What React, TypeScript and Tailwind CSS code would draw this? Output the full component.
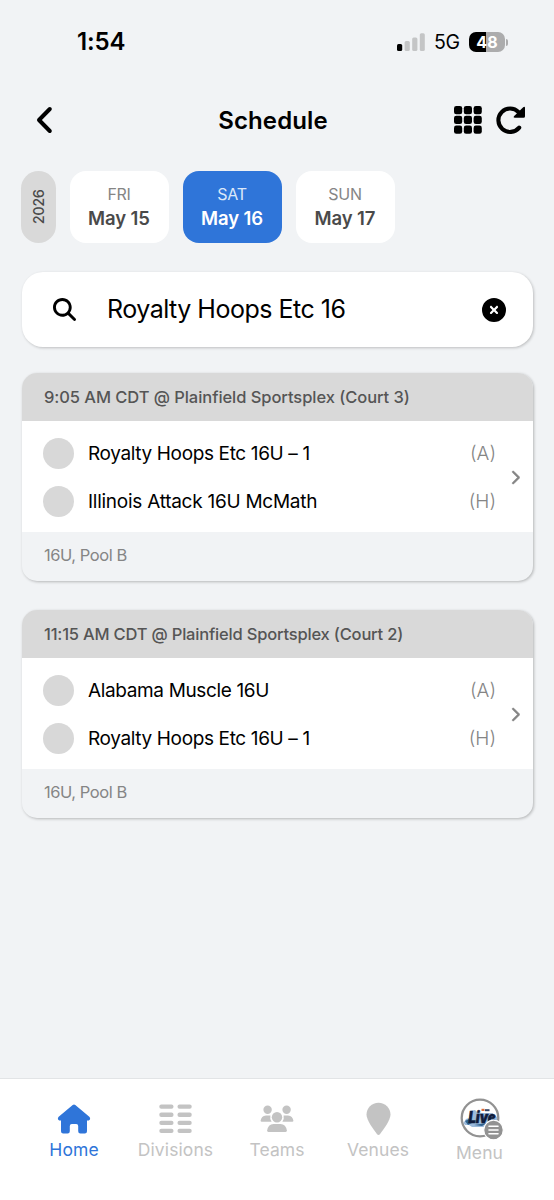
import { FaChevronRight, FaMagnifyingGlass, FaCircleXmark } from "react-icons/fa6";
import { clsx } from "clsx";

const DAYS = [
  { day: "FRI", date: "May 15", active: false },
  { day: "SAT", date: "May 16", active: true },
  { day: "SUN", date: "May 17", active: false },
];

const GAMES = [
  {
    title: "9:05 AM CDT @ Plainfield Sportsplex (Court 3)",
    titleClass: "tracking-[-0.06px]",
    pool: "16U, Pool B",
    teams: [
      { name: "Royalty Hoops Etc 16U – 1", side: "(A)", nameClass: "tracking-[-0.36px]" },
      { name: "Illinois Attack 16U McMath", side: "(H)", nameClass: "tracking-[-0.26px]" },
    ],
  },
  {
    title: "11:15 AM CDT @ Plainfield Sportsplex (Court 2)",
    titleClass: "tracking-[-0.19px]",
    pool: "16U, Pool B",
    teams: [
      { name: "Alabama Muscle 16U", side: "(A)", nameClass: "tracking-[-0.36px]" },
      { name: "Royalty Hoops Etc 16U – 1", side: "(H)", nameClass: "tracking-[-0.36px]" },
    ],
  },
];

function StatusBar() {
  return (
    <div className="flex h-[84px] shrink-0 items-center justify-between pr-[46px] pl-[77px]">
      <span className="text-[24px] font-semibold tracking-[-0.1px]">1:54</span>
      <div className="flex items-center">
        <svg width="28" height="18" viewBox="0 0 28 18">
          <rect x="0" y="11" width="5.2" height="7" rx="1.5" fill="#000" />
          <rect x="7.6" y="8" width="5.2" height="10" rx="1.5" fill="#c4c5c6" />
          <rect x="15.2" y="4.5" width="5.2" height="13.5" rx="1.5" fill="#c4c5c6" />
          <rect x="22.8" y="0.3" width="5" height="17.7" rx="1.5" fill="#c4c5c6" />
        </svg>
        <span className="mt-px ml-[9px] w-[26px] text-[19.5px] leading-none tracking-[-0.4px] whitespace-nowrap">
          5G
        </span>
        <div className="ml-[9px] flex h-5 w-9 items-center justify-center overflow-hidden rounded-[7px] bg-linear-to-r from-black from-48% to-[#acacad] to-48% text-[16px] font-bold tracking-[0.2px] text-white">
          48
        </div>
        <div className="ml-px h-[7px] w-[2px] rounded-r-full bg-[#acacad]" />
      </div>
    </div>
  );
}

function Header() {
  return (
    <header className="grid h-[72px] shrink-0 grid-cols-[1fr_auto_1fr] items-center pr-[28px] pl-[34px]">
      <svg width="20" height="28" viewBox="0 0 20 28" fill="none" stroke="#000" strokeWidth="4" strokeLinecap="round" strokeLinejoin="round">
        <path d="M15.8 3 L5 14 L15.8 25" />
      </svg>
      <h1 className="mt-px mr-[14px] text-[24px] font-semibold tracking-[0.1px]">Schedule</h1>
      <div className="flex items-center justify-end gap-[14px]">
        <svg width="28" height="28" viewBox="0 0 28 28">
          {[0, 9.8, 19.6].map((y) =>
            [0, 9.8, 19.6].map((x) => (
              <rect key={`${x}-${y}`} x={x} y={y} width="8.2" height="8.2" rx="2.3" />
            ))
          )}
        </svg>
        <svg width="30" height="28" viewBox="0 0 30 28">
          <path
            d="M22.6 6.2 A11.7 11.7 0 1 0 23.2 21.6"
            fill="none"
            stroke="#000"
            strokeWidth="4.1"
            strokeLinecap="round"
          />
          <path d="M27.2 1.3 Q29 0.2 29 1.9 V10.2 Q29 11.8 27.6 11.8 H18.8 Q16.8 11.8 18.2 10.1 Z" />
        </svg>
      </div>
    </header>
  );
}

function DateStrip() {
  return (
    <div className="mt-[15px] flex h-[72px] shrink-0 items-stretch gap-[14px] pl-[21px]">
      <div className="flex w-[35px] items-center justify-center rounded-full bg-[#d9d9d9]">
        <span className="-rotate-90 text-[14.5px] font-medium tracking-[-0.4px] text-[#4a4a4a]">2026</span>
      </div>
      {DAYS.map(({ day, date, active }) => (
        <button
          key={day}
          type="button"
          className={clsx(
            "flex w-[99px] flex-col items-center justify-center rounded-2xl pr-px pb-[2px]",
            active ? "bg-[#2f75d9] text-white" : "bg-white text-[#4a4a4a]"
          )}
        >
          <span
            className={clsx(
              "text-[16px] leading-6 tracking-[-0.3px]",
              active ? "text-[#dce8f9]" : "text-[#858585]"
            )}
          >
            {day}
          </span>
          <span className="text-[18.5px] leading-6 font-semibold tracking-[-0.1px]">{date}</span>
        </button>
      ))}
    </div>
  );
}

function SearchBox() {
  return (
    <div className="mt-[29px] mr-[21px] ml-[22px] flex h-[75px] shrink-0 items-center rounded-[21px] bg-white pr-[27px] pl-[31px] shadow-[1px_1px_3px_rgba(0,0,0,0.22)]">
      <FaMagnifyingGlass className="size-[23px]" />
      <span className="ml-[31px] flex-1 text-[25px] tracking-[-0.5px]">Royalty Hoops Etc 16</span>
      <FaCircleXmark className="size-6" />
    </div>
  );
}

function GameCard({ game }: { game: (typeof GAMES)[number] }) {
  return (
    <section className="h-[208px] shrink-0 overflow-hidden rounded-[15px] bg-[#f1f3f5] shadow-[1px_1px_3px_rgba(0,0,0,0.25)]">
      <div
        className={clsx(
          "flex h-12 items-center bg-[#d9d9d9] pl-[22px] text-[16.5px] font-medium whitespace-nowrap text-[#555]",
          game.titleClass
        )}
      >
        {game.title}
      </div>
      <div className="flex h-[111px] items-center bg-white pt-px pr-[13px] pl-[21px]">
        <div className="flex flex-1 flex-col gap-[17px]">
          {game.teams.map((team) => (
            <div key={team.name} className="flex h-[31px] items-center">
              <span className="size-[31px] shrink-0 rounded-full bg-[#d8d8d8]" />
              <span className={clsx("mt-[2px] ml-[14px] flex-1 text-[19px] whitespace-nowrap", team.nameClass)}>
                {team.name}
              </span>
              <span className="mt-[2px] text-[19px] font-light text-[#858585]">{team.side}</span>
            </div>
          ))}
        </div>
        <FaChevronRight
          className="ml-[14px] h-[15px] w-[10px] text-[#858585]"
          stroke="currentColor"
          strokeWidth="18"
        />
      </div>
      <div className="flex h-[47px] items-center pl-[22px] text-[16.5px] tracking-[-0.45px] text-[#858585]">
        {game.pool}
      </div>
    </section>
  );
}

function HomeIcon() {
  return (
    <svg width="34" height="30" viewBox="0 0 34 30" fill="currentColor">
      <path d="M15.7 1 Q17 0 18.3 1 L32.6 13.1 Q34 15.8 31.8 16.4 H30 V27.2 Q30 29.4 27.8 29.4 H23.4 Q21.2 29.4 21.2 27.2 V22 Q21.2 20 19.2 20 H14.8 Q12.8 20 12.8 22 V27.2 Q12.8 29.4 10.6 29.4 H6.2 Q4 29.4 4 27.2 V16.4 H2.2 Q0 15.8 1.4 13.1 Z" />
    </svg>
  );
}

function DivisionsIcon() {
  return (
    <svg width="33" height="30" viewBox="0 0 33 30" fill="currentColor">
      {[0.5, 8.6, 16.7, 24.8].map((y) => (
        <g key={y}>
          <rect x="0.3" y={y} width="14.2" height="4.3" rx="2" />
          <rect x="18.5" y={y} width="14.2" height="4.3" rx="2" />
        </g>
      ))}
    </svg>
  );
}

function TeamsIcon() {
  return (
    <svg width="34" height="30" viewBox="0 0 34 30" fill="currentColor">
      <circle cx="7.6" cy="5.8" r="4.2" />
      <circle cx="26.6" cy="5.8" r="4.2" />
      <circle cx="17" cy="13.3" r="5.2" />
      <path d="M6 11.4 H10.4 Q9.6 15 11.6 17.8 H1.8 Q0.5 17.8 0.6 16.6 Q1.2 12 6 11.4Z" />
      <path d="M28 11.4 H23.6 Q24.4 15 22.4 17.8 H32.2 Q33.5 17.8 33.4 16.6 Q32.8 12 28 11.4Z" />
      <path d="M13.6 20 H20.4 Q26 20.4 26.9 26.6 Q27 28 25.6 28 H8.4 Q7 28 7.1 26.6 Q8 20.4 13.6 20Z" />
    </svg>
  );
}

function VenuesIcon() {
  return (
    <svg width="25" height="34" viewBox="0 0 25 34" fill="currentColor">
      <path d="M12.5 0.8 C5.8 0.8 0.5 6 0.5 12.6 C0.5 18.2 7.5 27.7 10.9 32 Q12.5 33.8 14.1 32 C17.5 27.7 24.5 18.2 24.5 12.6 C24.5 6 19.2 0.8 12.5 0.8Z" />
    </svg>
  );
}

function MenuIcon() {
  return (
    <svg width="44" height="42" viewBox="0 0 44 42">
      <circle cx="20" cy="20" r="18.3" fill="#fff" stroke="#929292" strokeWidth="2.3" />
      <path d="M3.5 25 L6 21 L9 20 L10 13 L15 12 L17 14 L22 15 L32 15 L37 19 V24 L30 26 L26 27 L24 29 H12 L9 27 L5 27Z" fill="#9cbbdc" />
      <path d="M5 23 L9 21 L12 25 L8 27Z M27 25 L22 28 L14 27Z" fill="#2f628f" />
      <text
        x="8.5"
        y="25"
        fontSize="16"
        fontWeight="900"
        fontStyle="italic"
        fill="#101d3d"
        stroke="#101d3d"
        strokeWidth="0.6"
        textLength="27"
        lengthAdjust="spacingAndGlyphs"
      >
        Live
      </text>
      <rect x="21.5" y="10.8" width="3" height="2.2" fill="#d96b36" />
      <rect x="25" y="11.2" width="4.5" height="2" fill="#344566" />
      <circle cx="33.5" cy="32" r="9.8" fill="#929292" stroke="#fff" strokeWidth="1.2" />
      <path d="M29 28.2 H38 M29 32 H38 M29 35.8 H38" stroke="#fff" strokeWidth="1.6" strokeLinecap="round" />
    </svg>
  );
}

const TABS = [
  { label: "Home", icon: HomeIcon, active: true, width: "w-[101px]" },
  { label: "Divisions", icon: DivisionsIcon, active: false, width: "w-[102px]" },
  { label: "Teams", icon: TeamsIcon, active: false, width: "w-[101px]" },
  { label: "Venues", icon: VenuesIcon, active: false, width: "w-[101px]" },
];

function TabBar() {
  return (
    <nav className="mt-auto flex h-[122px] shrink-0 border-t border-[#e2e4e6] bg-white pl-[24px]">
      {TABS.map(({ label, icon: Icon, active, width }) => (
        <div
          key={label}
          className={clsx(
            "flex flex-col items-center pt-[22px] pr-px",
            width,
            active ? "text-[#2f75d9]" : "text-[#c3c3c3]"
          )}
        >
          <span className="flex h-[36px] items-center justify-center">
            <Icon />
          </span>
          <span className="mt-px text-[17.5px] leading-6 tracking-[0.1px]">{label}</span>
        </div>
      ))}
      <div className="flex w-[101px] flex-col items-center pt-[19px] text-[#c3c3c3]">
        <span className="ml-1">
          <MenuIcon />
        </span>
        <span className="mt-px text-[17.5px] leading-6 tracking-[0.1px]">Menu</span>
      </div>
    </nav>
  );
}

export default function App() {
  return (
    <div className="flex h-[1200px] w-[554px] flex-col overflow-hidden bg-[#f1f3f5] font-['Inter','Liberation_Sans',sans-serif] text-black">
      <StatusBar />
      <Header />
      <DateStrip />
      <SearchBox />
      <main className="mt-[26px] mr-[21px] ml-[22px] flex flex-col gap-[29px]">
        {GAMES.map((game) => (
          <GameCard key={game.title} game={game} />
        ))}
      </main>
      <TabBar />
    </div>
  );
}
